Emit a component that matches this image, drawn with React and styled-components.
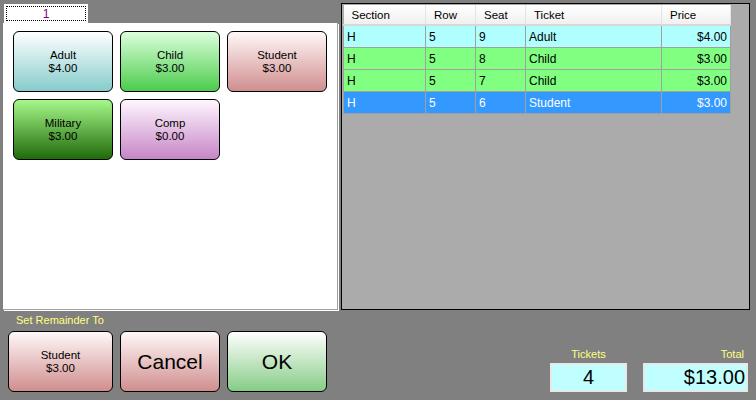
import styled, { createGlobalStyle } from "styled-components";

const GlobalStyle = createGlobalStyle`
  html, body {
    margin: 0;
    padding: 0;
    background: #808080;
  }
  body {
    font-family: "Liberation Sans", Arial, sans-serif;
    font-size: 11px;
    color: #000;
  }
`;

const Screen = styled.div`
  width: 756px;
  height: 400px;
  overflow: hidden;
  background: #808080;
  display: flex;
  flex-direction: column;
`;

const Top = styled.div`
  display: flex;
  gap: 3px;
  padding: 3px 0 0 3px;
  height: 307px;
`;

const TabPanel = styled.div`
  width: 335px;
  display: flex;
  flex-direction: column;
`;

const TabStrip = styled.div`
  height: 20px;
  display: flex;
  align-items: flex-end;
  padding-left: 1px;
`;

const Tab = styled.div`
  width: 84px;
  height: 19px;
  background: #fff;
  padding: 2px;
  box-sizing: border-box;
`;

const TabFocus = styled.div`
  height: 100%;
  border: 1px dotted #000;
  box-sizing: border-box;
  display: flex;
  align-items: center;
  justify-content: center;
  color: #800080;
  font-size: 12px;
`;

const PanelBody = styled.div`
  flex: 1;
  background: #fff;
  border-right: 1px solid #a0a0a0;
  border-bottom: 1px solid #a0a0a0;
  box-shadow: 1px 1px 0 #fff;
  padding: 8px 9px 0 10px;
  display: grid;
  grid-template-columns: repeat(3, 100px);
  grid-auto-rows: 61px;
  gap: 7px;
  align-content: start;
`;

const gradients = {
  adult: "linear-gradient(#ffffff, #86cccc)",
  child: "linear-gradient(#dcffdc, #4ccc4c)",
  student: "linear-gradient(#fff8f8, #d08e8e)",
  military: "linear-gradient(#a6f88a, #1f6a0a)",
  comp: "linear-gradient(#fff6ff, #c686c6)",
  ok: "linear-gradient(#ffffff, #86cc86)",
};

const TicketButton = styled.button`
  box-sizing: border-box;
  width: ${(p) => p.$w || 100}px;
  height: 61px;
  border: 1px solid #000;
  border-radius: 6px;
  background: ${(p) => gradients[p.$kind]};
  font-family: "Liberation Sans", Arial, sans-serif;
  font-size: ${(p) => (p.$big ? "21px" : "11.5px")};
  line-height: 13px;
  color: #000;
  display: flex;
  flex-direction: column;
  align-items: center;
  justify-content: center;
  padding: 0;
  cursor: pointer;
`;

const Grid = styled.div`
  width: 409px;
  height: 307px;
  box-sizing: border-box;
  border: 1px solid #000;
  background: #ababab;
  padding: 1px;
`;

const Table = styled.table`
  border-collapse: collapse;
  font-size: 12px;
  table-layout: fixed;
  width: 387px;
`;

const HeadCell = styled.th`
  height: 19px;
  padding: 0 0 0 8px;
  text-align: left;
  font-weight: normal;
  font-size: 11.5px;
  background: linear-gradient(#ffffff, #f0f0f0);
  border-right: 1px solid #e4e4e4;
  border-bottom: 2px solid #d8d8d8;
  white-space: nowrap;
`;

const rowColors = {
  adult: "#b0ffff",
  child: "#80ff80",
  student: "#3399ff",
};

const Row = styled.tr`
  background: ${(p) => (p.$selected ? "#3399ff" : rowColors[p.$kind])};
  color: ${(p) => (p.$selected ? "#fff" : "#000")};
`;

const Cell = styled.td`
  height: 21px;
  padding: 0 3px;
  border: 1px solid #a0a0a0;
  border-top: none;
  text-align: ${(p) => (p.$right ? "right" : "left")};
  white-space: nowrap;
`;

const Bottom = styled.div`
  display: flex;
  padding: 4px 0 0 8px;
`;

const Remainder = styled.div`
  display: flex;
  flex-direction: column;
`;

const YellowLabel = styled.div`
  color: #ffff80;
  font-size: 11px;
  text-align: ${(p) => p.$align || "center"};
  padding: ${(p) => p.$pad || "0"};
`;

const ButtonRow = styled.div`
  display: flex;
  gap: 7px;
  margin-top: 5px;
`;

const Totals = styled.div`
  display: flex;
  gap: 16px;
  margin-left: auto;
  margin-right: 8px;
  padding-top: 34px;
`;

const TotalGroup = styled.div`
  display: flex;
  flex-direction: column;
  gap: 3px;
`;

const ValueBox = styled.div`
  box-sizing: border-box;
  width: ${(p) => p.$w}px;
  height: 29px;
  background: #c0ffff;
  border: 2px solid #e8e8e8;
  font-size: 20px;
  display: flex;
  align-items: center;
  justify-content: ${(p) => (p.$right ? "flex-end" : "center")};
  padding: 0 1px;
`;

const tickets = [
  { name: "Adult", price: "$4.00", kind: "adult" },
  { name: "Child", price: "$3.00", kind: "child" },
  { name: "Student", price: "$3.00", kind: "student" },
  { name: "Military", price: "$3.00", kind: "military" },
  { name: "Comp", price: "$0.00", kind: "comp" },
];

const seats = [
  { section: "H", row: "5", seat: "9", ticket: "Adult", price: "$4.00", kind: "adult" },
  { section: "H", row: "5", seat: "8", ticket: "Child", price: "$3.00", kind: "child" },
  { section: "H", row: "5", seat: "7", ticket: "Child", price: "$3.00", kind: "child" },
  { section: "H", row: "5", seat: "6", ticket: "Student", price: "$3.00", kind: "student", selected: true },
];

const App = () => {
  return (
    <Screen>
      <GlobalStyle />
      <Top>
        <TabPanel>
          <TabStrip>
            <Tab>
              <TabFocus>1</TabFocus>
            </Tab>
          </TabStrip>
          <PanelBody>
            {tickets.map((t) => (
              <TicketButton key={t.name} $kind={t.kind}>
                <span>{t.name}</span>
                <span>{t.price}</span>
              </TicketButton>
            ))}
          </PanelBody>
        </TabPanel>
        <Grid>
          <Table>
            <colgroup>
              <col style={{ width: 82 }} />
              <col style={{ width: 50 }} />
              <col style={{ width: 50 }} />
              <col style={{ width: 136 }} />
              <col style={{ width: 69 }} />
            </colgroup>
            <thead>
              <tr>
                <HeadCell>Section</HeadCell>
                <HeadCell>Row</HeadCell>
                <HeadCell>Seat</HeadCell>
                <HeadCell>Ticket</HeadCell>
                <HeadCell>Price</HeadCell>
              </tr>
            </thead>
            <tbody>
              {seats.map((s) => (
                <Row key={s.seat} $kind={s.kind} $selected={s.selected}>
                  <Cell>{s.section}</Cell>
                  <Cell>{s.row}</Cell>
                  <Cell>{s.seat}</Cell>
                  <Cell>{s.ticket}</Cell>
                  <Cell $right>{s.price}</Cell>
                </Row>
              ))}
            </tbody>
          </Table>
        </Grid>
      </Top>
      <Bottom>
        <Remainder>
          <YellowLabel $align="left" $pad="0 0 0 8px">
            Set Remainder To
          </YellowLabel>
          <ButtonRow>
            <TicketButton $kind="student" $w={105}>
              <span>Student</span>
              <span>$3.00</span>
            </TicketButton>
            <TicketButton $kind="student" $big>
              Cancel
            </TicketButton>
            <TicketButton $kind="ok" $big>
              OK
            </TicketButton>
          </ButtonRow>
        </Remainder>
        <Totals>
          <TotalGroup>
            <YellowLabel>Tickets</YellowLabel>
            <ValueBox $w={77}>4</ValueBox>
          </TotalGroup>
          <TotalGroup>
            <YellowLabel $align="right" $pad="0 4px 0 0">
              Total
            </YellowLabel>
            <ValueBox $w={105} $right>
              $13.00
            </ValueBox>
          </TotalGroup>
        </Totals>
      </Bottom>
    </Screen>
  );
};

export default App;
